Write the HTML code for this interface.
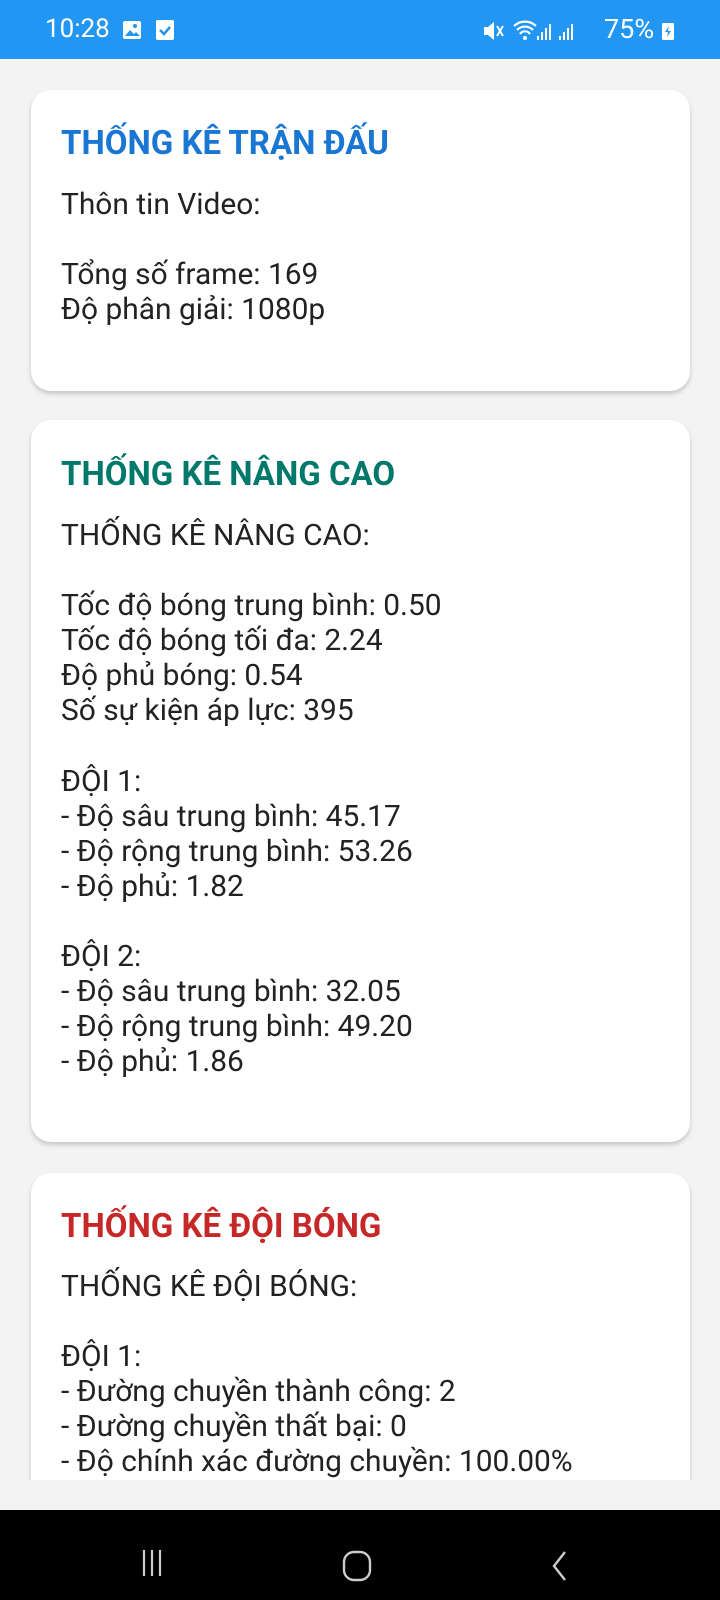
<!DOCTYPE html>
<html><head><meta charset="utf-8"><style>
*{margin:0;padding:0;box-sizing:border-box}
body{width:720px;height:1600px;background:#f3f3f3;position:relative;overflow:hidden;font-family:"Roboto","Liberation Sans",sans-serif}
.sb{position:absolute;left:0;top:0;width:720px;height:59px;background:#2196F3;color:#fff}
.card{position:absolute;left:31px;width:659px;background:#fff;border-radius:20px;box-shadow:0 3px 5px rgba(0,0,0,.18)}
.t{position:absolute;left:61px;font-weight:bold;font-size:33px;line-height:40px}
.b{position:absolute;left:61px;font-size:29.9px;line-height:35.1px;color:#222;white-space:pre}
.nav{position:absolute;left:0;top:1510px;width:720px;height:90px;background:#000}
</style></head><body>
<div class="sb">
<div style="position:absolute;left:45px;top:14px;font-size:26px;line-height:30px">10:28</div>
<svg style="position:absolute;left:122px;top:20px" width="20" height="20"><rect x="1" y="1" width="18" height="18" rx="2" fill="#fff"/><path d="M3 16l5-6 4 4 2-2 4 4z" fill="#2196F3"/><circle cx="13" cy="6" r="2" fill="#2196F3"/></svg>
<svg style="position:absolute;left:155px;top:19px" width="20" height="22"><rect x="1" y="1" width="18" height="20" rx="2" fill="#fff"/><path d="M5 11l4 4 6-7" stroke="#2196F3" stroke-width="2.5" fill="none"/></svg>
<svg style="position:absolute;left:482px;top:20px" width="24" height="22"><path d="M2 7h4l6-5v18l-6-5H2z" fill="#fff"/><path d="M15 6l6 10M21 6l-6 10" stroke="#fff" stroke-width="2"/></svg>
<svg style="position:absolute;left:512px;top:18px" width="80" height="24"><path d="M2 8a16 16 0 0 1 22 0M5 12a11 11 0 0 1 16 0M8 16a6 6 0 0 1 10 0" stroke="#fff" stroke-width="2.2" fill="none"/><circle cx="13" cy="20" r="2" fill="#fff"/><path d="M26 22v-4M30 22v-8M34 22v-12M38 22v-16M48 22v-4M52 22v-8M56 22v-12M60 22v-16" stroke="#fff" stroke-width="2"/></svg>
<div style="position:absolute;left:604px;top:14px;font-size:27px;line-height:30px">75%</div>
<svg style="position:absolute;left:661px;top:21px" width="14" height="20"><rect x="1" y="2" width="12" height="17" rx="1.5" fill="#fff"/><path d="M8 5l-4 6h3l-1 5 4-6h-3z" fill="#2196F3"/></svg>
</div>

<div class="card" style="top:90px;height:301px"></div>
<div class="t" style="top:124px;color:#1976D2">THỐNG KÊ TRẬN ĐẤU</div>
<div class="b" style="top:187px">Thôn tin Video:

Tổng số frame: 169
Độ phân giải: 1080p</div>

<div class="card" style="top:420px;height:722px"></div>
<div class="t" style="top:455px;color:#00796B">THỐNG KÊ NÂNG CAO</div>
<div class="b" style="top:518px">THỐNG KÊ NÂNG CAO:

Tốc độ bóng trung bình: 0.50
Tốc độ bóng tối đa: 2.24
Độ phủ bóng: 0.54
Số sự kiện áp lực: 395

ĐỘI 1:
- Độ sâu trung bình: 45.17
- Độ rộng trung bình: 53.26
- Độ phủ: 1.82

ĐỘI 2:
- Độ sâu trung bình: 32.05
- Độ rộng trung bình: 49.20
- Độ phủ: 1.86</div>

<div class="card" style="top:1173px;height:400px;border-radius:20px 20px 0 0"></div>
<div class="t" style="top:1207px;color:#C62828">THỐNG KÊ ĐỘI BÓNG</div>
<div class="b" style="top:1269px">THỐNG KÊ ĐỘI BÓNG:

ĐỘI 1:
- Đường chuyền thành công: 2
- Đường chuyền thất bại: 0
- Độ chính xác đường chuyền: 100.00%</div>
<div style="position:absolute;left:0;top:1480px;width:720px;height:30px;background:#f3f3f3"></div>

<div class="nav">
<svg style="position:absolute;left:140px;top:38px" width="30" height="30"><path d="M4 2v26M12 2v26M20 2v26" stroke="#ccc" stroke-width="2.2"/></svg>
<svg style="position:absolute;left:342px;top:40px" width="30" height="32"><rect x="2" y="2" width="26" height="28" rx="10" stroke="#ccc" stroke-width="2.4" fill="none"/></svg>
<svg style="position:absolute;left:550px;top:40px" width="20" height="32"><path d="M15 2L4 16l11 14" stroke="#ccc" stroke-width="2.4" fill="none"/></svg>
</div>
</body></html>
